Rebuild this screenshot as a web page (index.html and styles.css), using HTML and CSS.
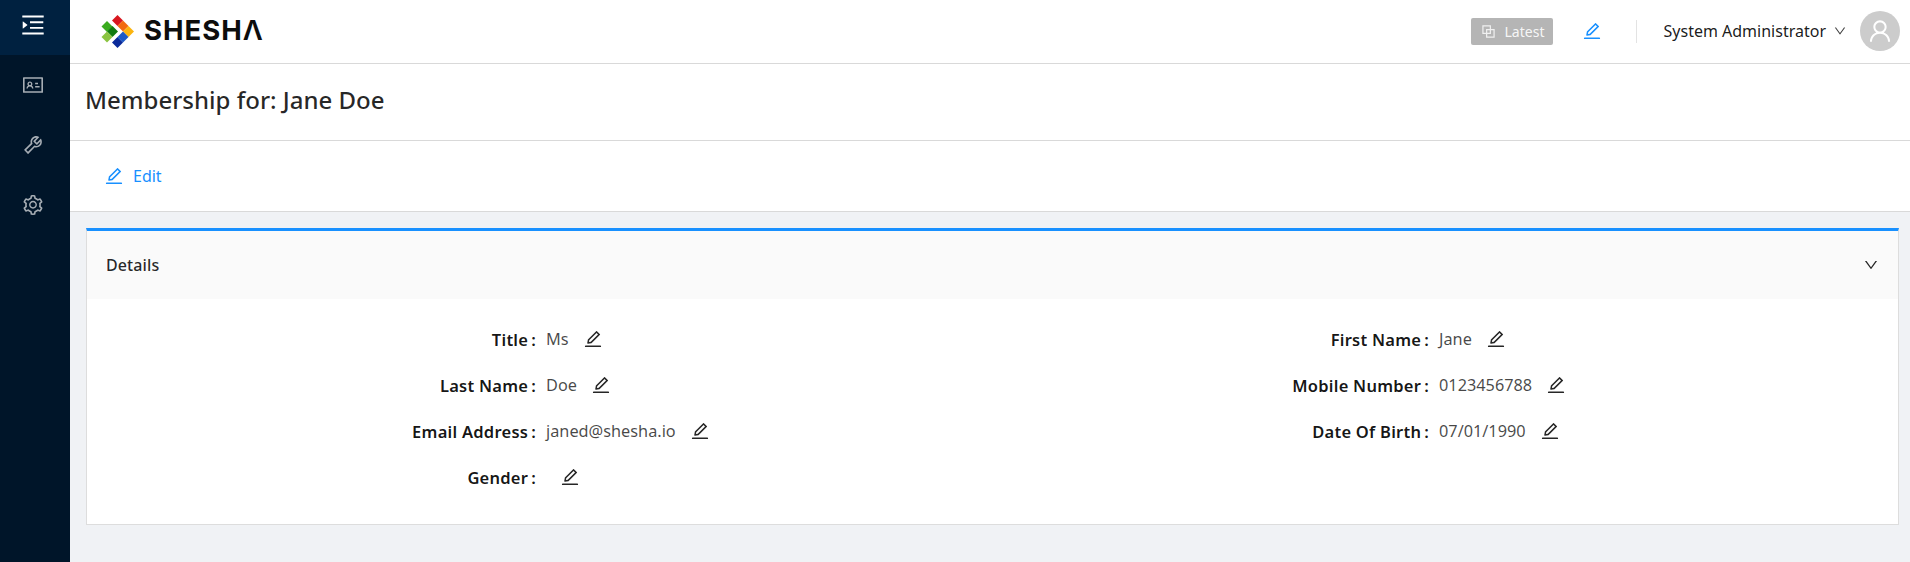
FILE: index.html
```html
<!DOCTYPE html>
<html lang="en">
<head>
<meta charset="utf-8">
<title>Membership for: Jane Doe</title>
<link rel="stylesheet" href="styles.css">
</head>
<body>
<svg class="defs" width="0" height="0" aria-hidden="true">
  <symbol id="i-edit" viewBox="64 64 896 896"><path d="M257.7 752c2 0 4-.2 6-.5L431.9 722c2-.4 3.9-1.3 5.3-2.8l423.9-423.9a9.96 9.96 0 0 0 0-14.1L694.9 114.9c-1.9-1.9-4.4-2.9-7.1-2.9s-5.2 1-7.1 2.9L256.8 538.8c-1.5 1.5-2.4 3.3-2.8 5.3l-29.5 168.2a33.5 33.5 0 0 0 9.4 29.8c6.6 6.4 14.9 9.9 23.8 9.9zm67.4-174.4L687.8 215l73.3 73.3-362.7 362.6-88.9 15.7 15.6-89zM880 836H144c-17.7 0-32 14.3-32 32v36c0 4.4 3.6 8 8 8h784c4.4 0 8-3.6 8-8v-36c0-17.7-14.3-32-32-32z"/></symbol>
  <symbol id="i-down" viewBox="64 64 896 896"><path d="M884 256h-75c-5.1 0-9.9 2.5-12.9 6.6L512 654.2 227.9 262.6c-3-4.1-7.8-6.6-12.9-6.6h-75c-6.5 0-10.3 7.4-6.5 12.7l352.6 486.1c12.8 17.6 39 17.6 51.7 0l352.6-486.1c3.9-5.3.1-12.7-6.4-12.7z"/></symbol>
</svg>
<div class="app">
  <aside class="sider">
    <div class="sider-toggle">
      <svg class="icon-menu" viewBox="64 64 896 896"><path d="M408 442h480c4.4 0 8-3.6 8-8v-56c0-4.4-3.6-8-8-8H408c-4.4 0-8 3.6-8 8v56c0 4.4 3.6 8 8 8zm-8 204c0 4.4 3.6 8 8 8h480c4.4 0 8-3.6 8-8v-56c0-4.4-3.6-8-8-8H408c-4.4 0-8 3.6-8 8v56zm504-486H120c-4.4 0-8 3.6-8 8v56c0 4.4 3.6 8 8 8h784c4.4 0 8-3.6 8-8v-56c0-4.4-3.6-8-8-8zm0 632H120c-4.4 0-8 3.6-8 8v56c0 4.4 3.6 8 8 8h784c4.4 0 8-3.6 8-8v-56c0-4.4-3.6-8-8-8zM142.4 642.1L298.7 519a8.84 8.84 0 0 0 0-13.9L142.4 381.9c-5.8-4.6-14.4-.5-14.4 6.9v246.3a8.9 8.9 0 0 0 14.4 7z"/></svg>
    </div>
    <nav class="sider-nav">
      <a class="nav-item"><svg class="icon-nav" viewBox="64 64 896 896"><path d="M928 160H96c-17.7 0-32 14.3-32 32v640c0 17.7 14.3 32 32 32h832c17.7 0 32-14.3 32-32V192c0-17.7-14.3-32-32-32zm-40 632H136V232h752v560zM610.3 476h123.4c1.3 0 2.3-3.6 2.3-8v-48c0-4.4-1-8-2.3-8H610.3c-1.3 0-2.3 3.6-2.3 8v48c0 4.4 1 8 2.3 8zm4.8 144h185.7c3.9 0 7.1-3.6 7.1-8v-48c0-4.4-3.2-8-7.1-8H615.1c-3.9 0-7.1 3.6-7.1 8v48c0 4.4 3.2 8 7.1 8zM224 673h43.9c4.2 0 7.6-3.3 7.9-7.5 3.8-50.5 46-90.5 97.2-90.5s93.4 40 97.2 90.5c.3 4.2 3.7 7.5 7.9 7.5H522a8 8 0 0 0 8-8.4c-2.8-53.3-32-99.7-74.6-126.1a111.8 111.8 0 0 0 29.1-75.5c0-61.9-49.9-112-111.4-112s-111.4 50.1-111.4 112c0 29.1 11 55.5 29.1 75.5a158.09 158.09 0 0 0-74.6 126.1c-.4 4.6 3.2 8.4 7.8 8.4zm149-262c28.5 0 51.7 23.3 51.7 52s-23.2 52-51.7 52-51.7-23.3-51.7-52 23.2-52 51.7-52z"/></svg></a>
      <a class="nav-item"><svg class="icon-nav" viewBox="64 64 896 896"><path d="M876.6 239.5c-.5-.9-1.2-1.8-2-2.5-5-5-13.1-5-18.1 0L684.2 409.3l-67.9-67.9L788.7 169c.8-.8 1.4-1.6 2-2.5 3.6-6.1 1.6-13.9-4.5-17.5-98.2-58-226.8-44.7-311.3 39.7-67 67-89.2 162-66.5 247.4l-293 293c-3 3-2.8 7.9.3 11l169.7 169.7c3.1 3.1 8.1 3.3 11 .3l292.9-292.9c85.5 22.8 180.5.7 247.6-66.4 84.4-84.5 97.7-213.1 39.7-311.3zM786 499.8c-58.1 58.1-145.3 69.3-214.6 33.6l-8.8 8.8-.1-.1-274 274.1-79.2-79.2 230.1-230.1s0 .1.1.1l52.8-52.8c-35.7-69.3-24.5-156.5 33.6-214.6a184.2 184.2 0 0 1 144-53.5L537 318.9a32.05 32.05 0 0 0 0 45.3l124.5 124.5a32.05 32.05 0 0 0 45.3 0l132.8-132.8c3.7 51.8-14.4 104.8-53.6 143.9z"/></svg></a>
      <a class="nav-item"><svg class="icon-nav" viewBox="64 64 896 896"><path d="M924.8 625.7l-65.5-56c3.1-19 4.7-38.4 4.7-57.8s-1.6-38.8-4.7-57.8l65.5-56a32.03 32.03 0 0 0 9.3-35.2l-.9-2.6a443.74 443.74 0 0 0-79.7-137.9l-1.8-2.1a32.12 32.12 0 0 0-35.1-9.5l-81.3 28.9c-30-24.6-63.5-44-99.7-57.6l-15.7-85a32.05 32.05 0 0 0-25.8-25.7l-2.7-.5c-52.1-9.4-106.9-9.4-159 0l-2.7.5a32.05 32.05 0 0 0-25.8 25.7l-15.8 85.4a351.86 351.86 0 0 0-99 57.4l-81.9-29.1a32 32 0 0 0-35.1 9.5l-1.8 2.1a446.02 446.02 0 0 0-79.7 137.9l-.9 2.6c-4.5 12.5-.8 26.5 9.3 35.2l66.3 56.6c-3.1 18.8-4.6 38-4.6 57.1 0 19.2 1.5 38.4 4.6 57.1L99 625.5a32.03 32.03 0 0 0-9.3 35.2l.9 2.6c18.1 50.4 44.9 96.9 79.7 137.9l1.8 2.1a32.12 32.12 0 0 0 35.1 9.5l81.9-29.1c29.8 24.5 63.1 43.9 99 57.4l15.8 85.4a32.05 32.05 0 0 0 25.8 25.7l2.7.5a449.4 449.4 0 0 0 159 0l2.7-.5a32.05 32.05 0 0 0 25.8-25.7l15.7-85a350 350 0 0 0 99.7-57.6l81.3 28.9a32 32 0 0 0 35.1-9.5l1.8-2.1c34.8-41.1 61.6-87.5 79.7-137.9l.9-2.6c4.5-12.3.8-26.3-9.3-35zM788.3 465.9c2.5 15.1 3.8 30.6 3.8 46.1s-1.3 31-3.8 46.1l-6.6 40.1 74.7 63.9a370.03 370.03 0 0 1-42.6 73.6L721 702.8l-31.4 25.8c-23.9 19.6-50.5 35-79.3 45.8l-38.1 14.3-17.9 97a377.5 377.5 0 0 1-85 0l-17.9-97.2-37.8-14.5c-28.5-10.8-55-26.2-78.7-45.7l-31.4-25.9-93.4 33.2c-17-22.9-31.2-47.6-42.6-73.6l75.5-64.5-6.5-40c-2.4-14.9-3.7-30.3-3.7-45.5 0-15.3 1.2-30.6 3.7-45.5l6.5-40-75.5-64.5c11.3-26.1 25.6-50.7 42.6-73.6l93.4 33.2 31.4-25.9c23.7-19.5 50.2-34.9 78.7-45.7l37.9-14.3 17.9-97.2c28.1-3.2 56.8-3.2 85 0l17.9 97 38.1 14.3c28.7 10.8 55.4 26.2 79.3 45.8l31.4 25.8 92.8-32.9c17 22.9 31.2 47.6 42.6 73.6L781.8 426l6.5 39.9zM512 326c-97.2 0-176 78.8-176 176s78.8 176 176 176 176-78.8 176-176-78.8-176-176-176zm79.2 255.2A111.6 111.6 0 0 1 512 614c-29.9 0-58-11.7-79.2-32.8A111.6 111.6 0 0 1 400 502c0-29.9 11.7-58 32.8-79.2C454 401.6 482.1 390 512 390c29.9 0 58 11.6 79.2 32.8A111.6 111.6 0 0 1 624 502c0 29.9-11.7 58-32.8 79.2z"/></svg></a>
    </nav>
  </aside>
  <div class="main">
    <header class="topbar">
      <div class="logo">
        <svg class="logo-mark" viewBox="0 0 36 37">
          <polygon fill="#d8171f" points="17.5,2 23,7.5 17.5,13 12,7.5"/>
          <polygon fill="#f26a0f" points="23,7.5 28.5,13 23,18.5 17.5,13"/>
          <polygon fill="#fbb40f" points="28.5,13 34,18.5 28.5,24 23,18.5"/>
          <polygon fill="#1c59c6" points="23,18.5 28.5,24 23,29.5 17.5,24"/>
          <polygon fill="#0a2a9a" points="17.5,24 23,29.5 17.5,35 12,29.5"/>
          <polygon fill="#3aab1e" points="7,8 12.5,13.5 7,19 1.5,13.5"/>
          <polygon fill="#107a10" points="12.5,13 18,18.5 12.5,24 7,18.5"/>
          <polygon fill="#8bc441" points="7,18.5 12.5,24 7,29.5 1.5,24"/>
        </svg>
        <span class="logo-text">SHESH<span class="logo-lambda">Λ</span></span>
      </div>
      <div class="top-actions">
        <span class="version-tag">
          <svg class="icon-block" viewBox="0 0 14 14"><path d="M1 1h8v8H1zM5 5h8v8H5z"/></svg>
          Latest
        </span>
        <svg class="icon-edit icon-blue icon-top"><use href="#i-edit"/></svg>
        <span class="divider"></span>
        <span class="user-name">System Administrator</span>
        <svg class="icon-chevron"><use href="#i-down"/></svg>
        <span class="avatar">
          <svg class="icon-user" viewBox="64 64 896 896"><path d="M858.5 763.6a374 374 0 0 0-80.6-119.5 375.63 375.63 0 0 0-119.5-80.6c-.4-.2-.8-.3-1.2-.5C719.5 518 760 444.7 760 362c0-137-111-248-248-248S264 225 264 362c0 82.7 40.5 156 102.8 201.1-.4.2-.8.3-1.2.5-44.8 18.9-85 46-119.5 80.6a375.63 375.63 0 0 0-80.6 119.5A371.7 371.7 0 0 0 136 901.8a8 8 0 0 0 8 8.2h60c4.4 0 7.9-3.5 8-7.8 2-77.2 33-149.5 87.8-204.3 56.7-56.7 132-87.9 212.2-87.9s155.5 31.2 212.2 87.9C779 752.7 810 825 812 902.2c.1 4.4 3.6 7.8 8 7.8h60a8 8 0 0 0 8-8.2c-1-47.8-10.9-94.3-29.5-138.2zM512 534c-45.9 0-89.1-17.9-121.6-50.4S340 407.9 340 362c0-45.9 17.9-89.1 50.4-121.6S466.1 190 512 190s89.1 17.9 121.6 50.4S684 316.1 684 362c0 45.9-17.9 89.1-50.4 121.6S557.9 534 512 534z"/></svg>
        </span>
      </div>
    </header>
    <div class="page-title"><h1>Membership for: Jane Doe</h1></div>
    <div class="toolbar">
      <a class="toolbar-btn"><svg class="icon-edit icon-blue"><use href="#i-edit"/></svg>Edit</a>
    </div>
    <section class="card">
      <div class="card-head">
        <span class="card-title">Details</span>
        <svg class="icon-head-chevron"><use href="#i-down"/></svg>
      </div>
      <div class="form-grid">
        <div class="field"><span class="label">Title</span><span class="value">Ms</span><svg class="icon-edit icon-dark"><use href="#i-edit"/></svg></div>
        <div class="field"><span class="label">First Name</span><span class="value">Jane</span><svg class="icon-edit icon-dark"><use href="#i-edit"/></svg></div>
        <div class="field"><span class="label">Last Name</span><span class="value">Doe</span><svg class="icon-edit icon-dark"><use href="#i-edit"/></svg></div>
        <div class="field"><span class="label">Mobile Number</span><span class="value">0123456788</span><svg class="icon-edit icon-dark"><use href="#i-edit"/></svg></div>
        <div class="field"><span class="label">Email Address</span><span class="value">janed@shesha.io</span><svg class="icon-edit icon-dark"><use href="#i-edit"/></svg></div>
        <div class="field"><span class="label">Date Of Birth</span><span class="value">07/01/1990</span><svg class="icon-edit icon-dark"><use href="#i-edit"/></svg></div>
        <div class="field"><span class="label">Gender</span><span class="value"></span><svg class="icon-edit icon-dark"><use href="#i-edit"/></svg></div>
      </div>
    </section>
  </div>
</div>
</body>
</html>
```
FILE: styles.css
```css
* { box-sizing: border-box; }
html, body { margin: 0; height: 100%; }
body {
  font-family: "Noto Sans", "Open Sans", "Liberation Sans", sans-serif;
  font-size: 16px;
  color: rgba(0, 0, 0, 0.85);
  background: #f0f2f5;
  overflow: hidden;
}
.defs { position: absolute; }
svg { fill: currentColor; display: block; flex: none; }

.app { display: flex; height: 100vh; }

.sider { width: 70px; flex: none; background: #001529; }
.sider-toggle {
  height: 55px;
  background: #002140;
  display: flex;
  align-items: center;
  justify-content: center;
  padding-bottom: 5px;
  color: #fff;
}
.icon-menu { width: 24px; height: 24px; margin-left: -4px; }
.nav-item {
  height: 60px;
  display: flex;
  align-items: center;
  justify-content: center;
  color: rgba(255, 255, 255, 0.65);
  margin-left: -4px;
}
.icon-nav { width: 20px; height: 20px; }

.main { flex: 1; min-width: 0; display: flex; flex-direction: column; }

.topbar {
  height: 64px;
  flex: none;
  background: #fff;
  border-bottom: 1px solid #d9d9d9;
  display: flex;
  align-items: center;
  justify-content: space-between;
  padding: 0 10px 1px 30px;
}
.logo { display: flex; align-items: center; gap: 8px; }
.logo-mark { width: 36px; height: 37px; }
.logo-text {
  font-family: "Inter", "Liberation Sans", sans-serif;
  font-weight: 700;
  font-size: 27.5px;
  line-height: 1;
  color: #0d0d0d;
  letter-spacing: 1px;
}
.logo-lambda { font-weight: 600; }
.top-actions { display: flex; align-items: center; }
.version-tag {
  width: 82px;
  height: 27px;
  background: #b5b5b5;
  border-radius: 2px;
  color: rgba(255, 255, 255, 0.9);
  font-size: 14px;
  display: flex;
  align-items: center;
  gap: 10px;
  padding-left: 11px;
}
.icon-block { width: 13px; height: 13px; fill: none; stroke: rgba(255,255,255,0.8); stroke-width: 1.3; }
.icon-edit { width: 18px; height: 18px; }
.icon-top { margin-left: 30px; }
.icon-blue { color: #1890ff; }
.icon-dark { color: rgba(0, 0, 0, 0.85); margin-left: 15px; }
.divider { width: 1px; height: 23px; background: #e3e3e3; margin: 0 27px 0 35px; }
.user-name { font-size: 16px; color: rgba(0, 0, 0, 0.9); }
.icon-chevron { width: 12px; height: 12px; margin: 0 14px 0 8px; color: rgba(0, 0, 0, 0.75); }
.avatar {
  width: 40px;
  height: 40px;
  border-radius: 50%;
  background: #ccc;
  color: #fff;
  display: flex;
  align-items: center;
  justify-content: center;
}
.icon-user { width: 24px; height: 24px; }

.page-title {
  height: 77px;
  flex: none;
  background: #fff;
  border-bottom: 1px solid #d9d9d9;
  display: flex;
  align-items: center;
  padding: 0 0 5px 15px;
}
.page-title h1 {
  margin: 0;
  font-size: 24px;
  font-weight: 500;
  color: rgba(0, 0, 0, 0.85);
}
.toolbar {
  height: 71px;
  flex: none;
  background: #fff;
  border-bottom: 1px solid #d9d9d9;
  display: flex;
  align-items: center;
  padding-left: 35px;
}
.toolbar-btn {
  display: flex;
  align-items: center;
  gap: 10px;
  color: #1890ff;
  font-size: 16px;
}

.card {
  margin: 16px 11px 0 16px;
  background: #fff;
  border: 1px solid #ddd;
  border-top: 3px solid #1890ff;
}
.card-head {
  height: 68px;
  background: #fafafa;
  display: flex;
  align-items: center;
  justify-content: space-between;
  padding: 0 20px 0 19px;
}
.card-title { font-size: 16px; font-weight: 500; letter-spacing: 0.1px; }
.icon-head-chevron { width: 14px; height: 14px; color: rgba(0, 0, 0, 0.85); }

.form-grid {
  display: grid;
  grid-template-columns: 1fr 1fr;
  grid-auto-rows: 46px;
  padding: 17px 12.5px 24px;
}
.field { display: flex; align-items: center; }
.label {
  width: 50%;
  flex: none;
  text-align: right;
  font-weight: 600;
  font-size: 16.5px;
  padding-right: 10px;
  letter-spacing: 0.25px;
  color: rgba(0, 0, 0, 0.92);
}
.label::after { content: ":"; margin-left: 3px; }
.value { font-weight: 400; font-size: 16.3px; color: rgba(0, 0, 0, 0.72); }
```
